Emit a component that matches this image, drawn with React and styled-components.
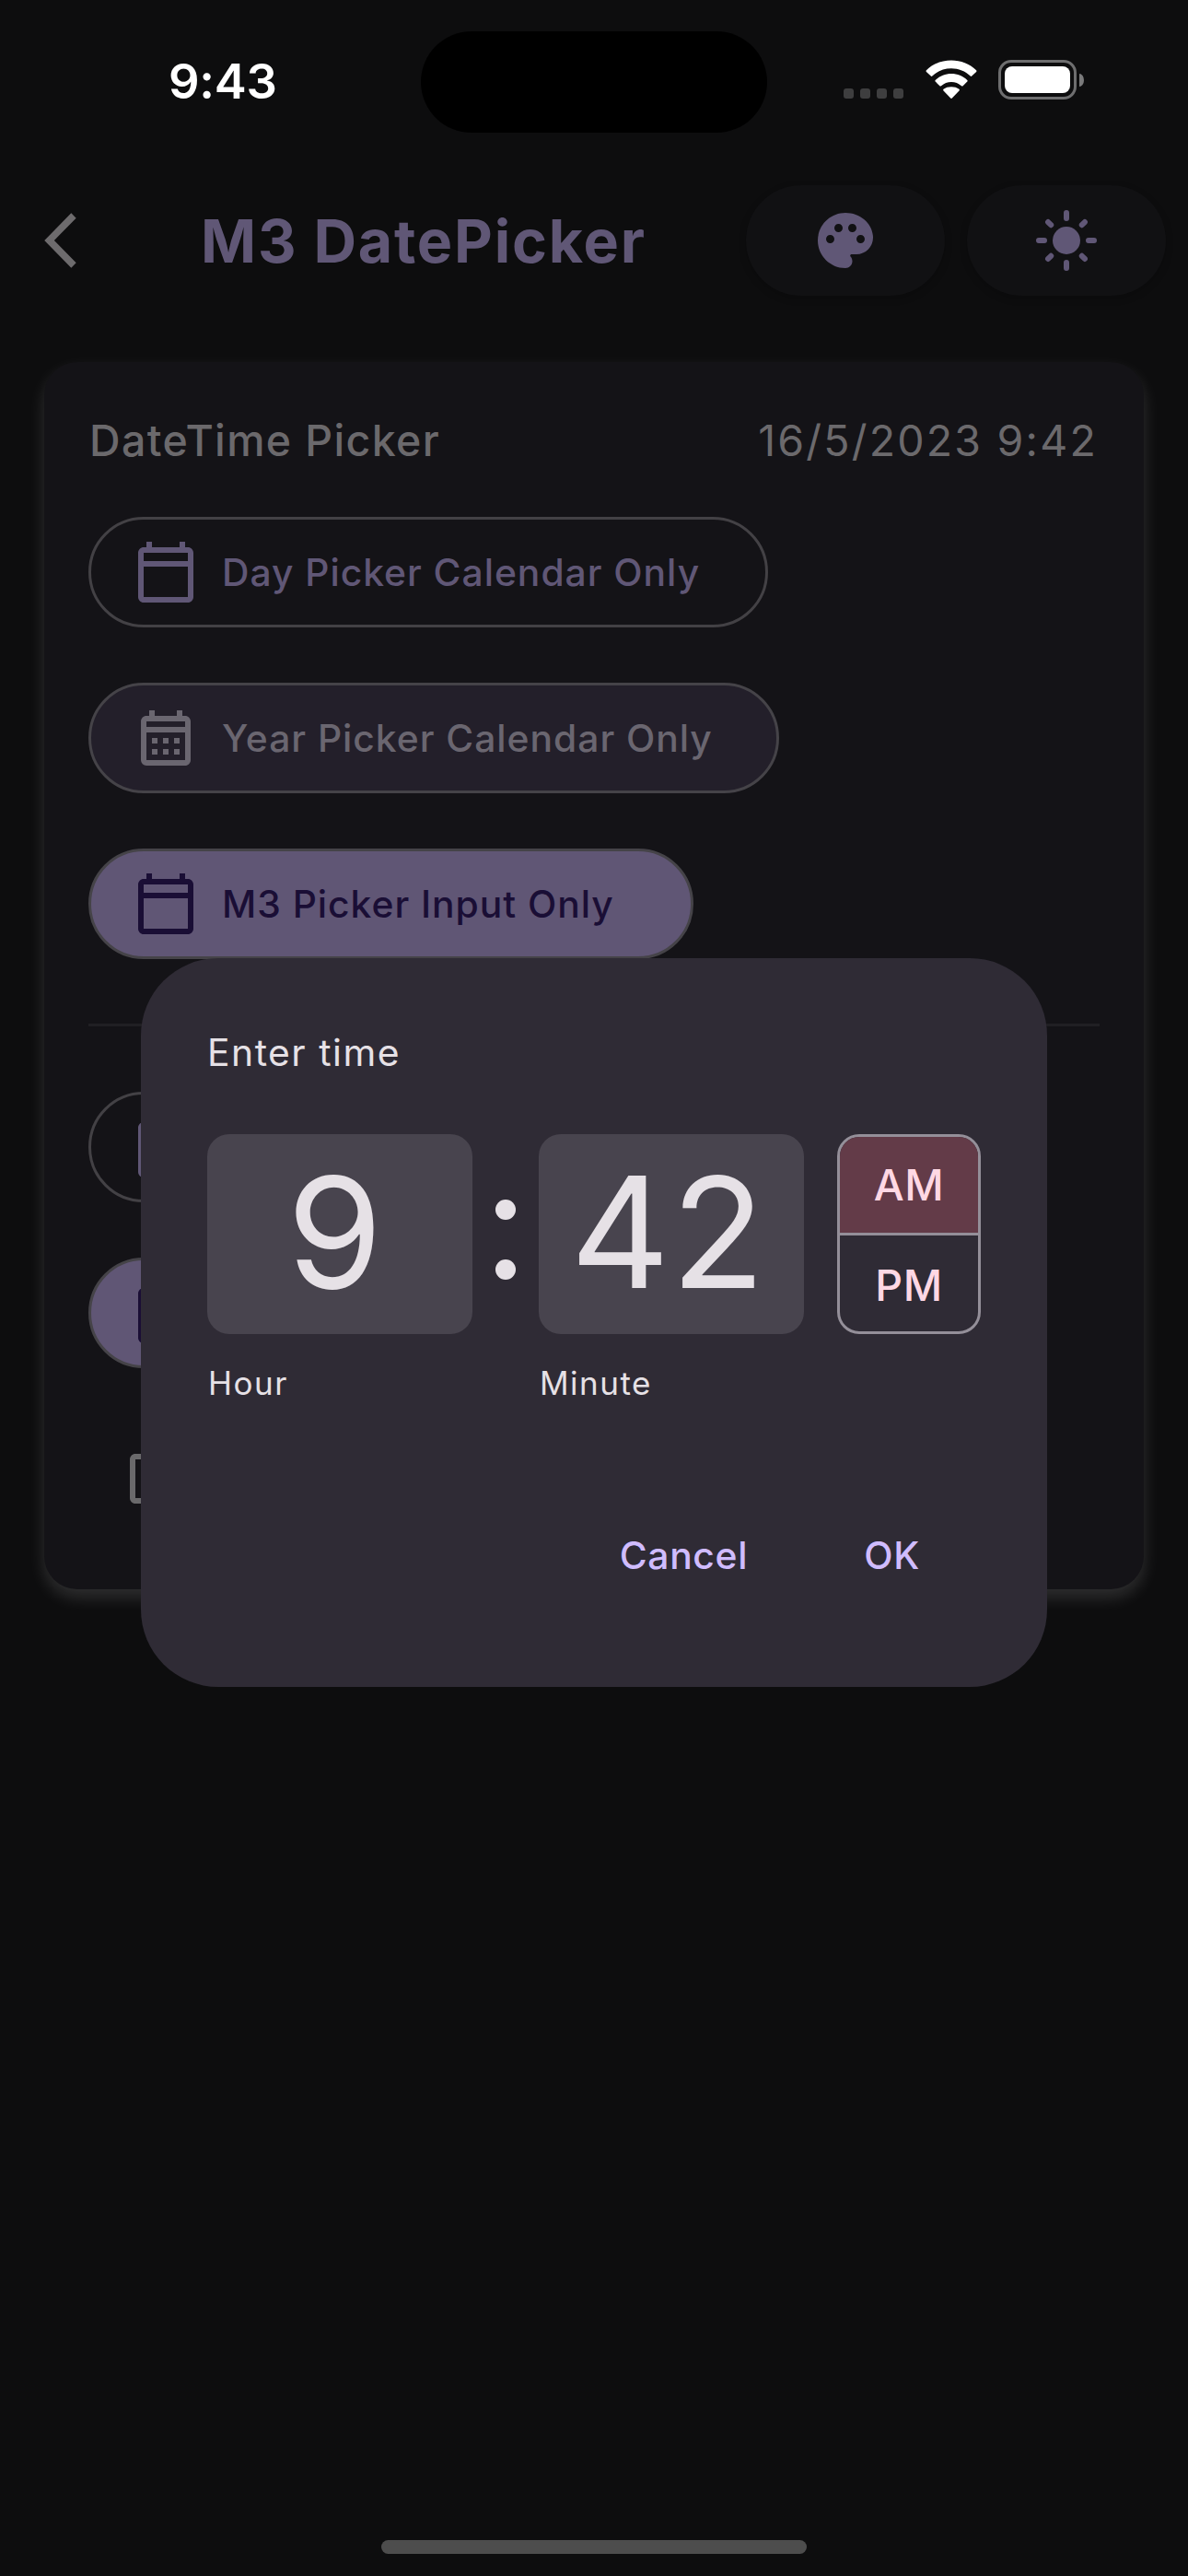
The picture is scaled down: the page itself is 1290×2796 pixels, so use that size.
import React from "react";
import styled, { createGlobalStyle } from "styled-components";

const GlobalStyle = createGlobalStyle`
  * { box-sizing: border-box; }
  html, body { margin: 0; padding: 0; background: #0d0d0e; }
  body { font-family: Inter, "Liberation Sans", sans-serif; }
  button { font-family: inherit; margin: 0; padding: 0; border: none; background: none; }
`;

const Screen = styled.div`
  position: relative;
  width: 1290px;
  height: 2796px;
  overflow: hidden;
  background: #0d0d0e;
  display: flex;
  flex-direction: column;
`;

const StatusBar = styled.header`
  height: 177px;
  flex: none;
  display: flex;
  align-items: flex-start;
`;

const Clock = styled.div`
  width: 457px;
  padding: 62px 0 0 183px;
  font-size: 52.5px;
  line-height: 52px;
  font-weight: 600;
  letter-spacing: -0.3px;
  color: #fff;
`;

const Island = styled.div`
  width: 376px;
  height: 110px;
  margin-top: 34px;
  border-radius: 55px;
  background: #000;
`;

const StatusIcons = styled.div`
  display: flex;
  align-items: flex-end;
  margin: 64px 0 0 83px;
  height: 44px;
`;

const SignalDots = styled.div`
  display: flex;
  gap: 7px;
`;

const SignalDot = styled.span`
  width: 11px;
  height: 11px;
  margin-bottom: 1px;
  border-radius: 3px;
  background: #3e3e3f;
`;

const WifiSvg = styled.svg`
  display: block;
  width: 58px;
  height: 43px;
  margin: 0 0 0 23px;
`;

const Battery = styled.div`
  width: 85px;
  height: 43px;
  margin-left: 22px;
  padding: 4px;
  border: 3px solid #6e6e6f;
  border-radius: 14px;
`;

const BatteryLevel = styled.div`
  height: 100%;
  border-radius: 8px;
  background: #fff;
`;

const BatteryCap = styled.div`
  width: 5px;
  height: 14px;
  margin: 0 0 14px 3px;
  border-radius: 0 5px 5px 0 / 0 7px 7px 0;
  background: #7a7a7b;
`;

const AppBar = styled.div`
  height: 168px;
  flex: none;
  display: flex;
  align-items: center;
  padding: 0 24px 0 48px;
`;

const BackSvg = styled.svg`
  display: block;
  width: 36px;
  height: 60px;
`;

const Title = styled.h1`
  flex: 1;
  margin: 1px 0 0 134px;
  font-size: 64.5px;
  line-height: 84px;
  font-weight: 700;
  letter-spacing: 1.8px;
  color: #605776;
  white-space: nowrap;
`;

const BarActions = styled.div`
  display: flex;
  gap: 24px;
`;

const BarButton = styled.button`
  width: 216px;
  height: 120px;
  border-radius: 60px;
  display: flex;
  align-items: center;
  justify-content: center;
  background: #111113;
  color: #605776;
  box-shadow: 0 3px 9px rgba(0, 0, 0, 0.2);
`;

const IconSvg = styled.svg`
  display: block;
  width: 72px;
  height: 72px;
  flex: none;
  fill: currentColor;
`;

const Card = styled.section`
  flex: none;
  margin: 48px 48px 0;
  height: 1332px;
  padding: 48px;
  border-radius: 36px;
  background: #141317;
  box-shadow: 0 9px 18px rgba(255, 255, 255, 0.14);
`;

const CardHeader = styled.div`
  height: 120px;
  padding: 7px 2px 0 1px;
  display: flex;
  align-items: flex-start;
  justify-content: space-between;
  font-size: 46.5px;
  line-height: 60px;
  color: #6b696c;
  white-space: nowrap;
`;

const CardTitle = styled.span`
  font-weight: 500;
  letter-spacing: 1.35px;
`;

const CardValue = styled.span`
  font-weight: 400;
  letter-spacing: 2.2px;
`;

const PillList = styled.div`
  display: flex;
  flex-direction: column;
  align-items: flex-start;
  gap: 60px;
`;

const tones = {
  outlined: { color: "#605776", background: "transparent", border: "#434145" },
  elevated: { color: "#6a6670", background: "#231f2a", border: "#454348" },
  filled: { color: "#1a0e35", background: "#605675", border: "#454348" },
  plain: { color: "#6a696b", background: "transparent", border: "transparent" },
};

const Pill = styled.button`
  width: ${(p) => p.$width}px;
  height: 120px;
  display: flex;
  align-items: center;
  padding-left: ${(p) => (p.$tone === "plain" ? 33 : 45)}px;
  border: 3px solid ${(p) => tones[p.$tone].border};
  border-radius: 60px;
  background: ${(p) => tones[p.$tone].background};
  color: ${(p) => tones[p.$tone].color};
`;

const PillLabel = styled.span`
  margin-left: 25px;
  font-size: 40.8px;
  line-height: 60px;
  font-weight: 500;
  letter-spacing: 0.98px;
  white-space: nowrap;
`;

const Divider = styled.hr`
  height: 3px;
  margin: 70px 0 71px;
  border: none;
  background: #201f23;
`;

const Dialog = styled.div`
  position: absolute;
  left: 153px;
  top: 1040px;
  width: 984px;
  height: 791px;
  padding: 72px 72px 0;
  border-radius: 84px;
  background: #2f2b35;
  color: #e6e1e6;
  display: flex;
  flex-direction: column;
`;

const DialogTitle = styled.div`
  height: 119px;
  font-size: 40.8px;
  line-height: 61px;
  font-weight: 400;
  letter-spacing: 1.5px;
  white-space: nowrap;
`;

const TimeRow = styled.div`
  display: flex;
  align-items: flex-start;
`;

const TimeField = styled.div`
  width: 288px;
`;

const TimeBox = styled.div`
  height: 217px;
  padding: 0 ${(p) => p.$inset}px 5px 0;
  border-radius: 24px;
  background: #48444e;
  display: flex;
  align-items: center;
  justify-content: center;
  font-size: 167.5px;
  line-height: 200px;
  font-weight: 400;
  letter-spacing: ${(p) => p.$spacing}px;
`;

const FieldLabel = styled.div`
  margin: 32px 0 0 1px;
  font-size: 35px;
  line-height: 42px;
  letter-spacing: 1.5px;
`;

const Colon = styled.div`
  width: 72px;
  height: 217px;
  display: flex;
  flex-direction: column;
  align-items: center;
  padding-top: 71px;
  gap: 43px;
`;

const ColonDot = styled.span`
  width: 22px;
  height: 22px;
  border-radius: 50%;
  background: #e6e1e6;
`;

const Period = styled.div`
  width: 156px;
  height: 217px;
  margin-left: 36px;
  border: 3px solid #948f99;
  border-radius: 24px;
  overflow: hidden;
  display: flex;
  flex-direction: column;
`;

const PeriodOption = styled.button`
  height: ${(p) => (p.$selected ? 107 : 104)}px;
  display: flex;
  align-items: center;
  justify-content: center;
  padding-top: ${(p) => (p.$selected ? 0 : 4)}px;
  border-bottom: ${(p) => (p.$selected ? "3px solid #948f99" : "none")};
  background: ${(p) => (p.$selected ? "#633b48" : "transparent")};
  color: #ffd8e4;
  font-size: 46.5px;
  line-height: 60px;
  font-weight: 500;
  letter-spacing: 0.5px;
`;

const Actions = styled.div`
  display: flex;
  justify-content: flex-end;
  gap: 126px;
  margin-top: 136px;
  padding-right: 66px;
`;

const TextButton = styled.button`
  color: #d0bcff;
  font-size: 40.8px;
  line-height: 60px;
  font-weight: 500;
  letter-spacing: 0.7px;
`;

const HomeIndicator = styled.div`
  width: 462px;
  height: 15px;
  margin: auto auto 24px;
  border-radius: 8px;
  background: #4d4d4d;
`;

const paths = {
  palette:
    "M12 2C6.49 2 2 6.49 2 12s4.49 10 10 10c1.38 0 2.5-1.12 2.5-2.5 0-.61-.23-1.2-.64-1.67-.08-.1-.13-.21-.13-.33 0-.28.22-.5.5-.5H16c3.31 0 6-2.69 6-6 0-4.96-4.49-9-10-9zm5.5 11c-.83 0-1.5-.67-1.5-1.5s.67-1.5 1.5-1.5 1.5.67 1.5 1.5-.67 1.5-1.5 1.5zm-3-4c-.83 0-1.5-.67-1.5-1.5S13.67 6 14.5 6s1.5.67 1.5 1.5S15.33 9 14.5 9zM5 11.5c0-.83.67-1.5 1.5-1.5s1.5.67 1.5 1.5S7.33 13 6.5 13 5 12.33 5 11.5zm6-4c0 .83-.67 1.5-1.5 1.5S8 8.33 8 7.5 8.67 6 9.5 6s1.5.67 1.5 1.5z",
  calendar:
    "M20 3h-1V1h-2v2H7V1H5v2H4c-1.1 0-2 .9-2 2v16c0 1.1.9 2 2 2h16c1.1 0 2-.9 2-2V5c0-1.1-.9-2-2-2zm0 18H4V10h16v11zm0-13H4V5h16v3z",
  month:
    "M19 4h-1V2h-2v2H8V2H6v2H5c-1.11 0-1.99.9-1.99 2L3 20a2 2 0 0 0 2 2h14c1.1 0 2-.9 2-2V6c0-1.1-.9-2-2-2zm0 16H5V10h14v10zm0-12H5V6h14v2zM9 14H7v-2h2v2zm4 0h-2v-2h2v2zm4 0h-2v-2h2v2zm-8 4H7v-2h2v2zm4 0h-2v-2h2v2zm4 0h-2v-2h2v2z",
  box: "M19 3H5c-1.1 0-2 .9-2 2v14c0 1.1.9 2 2 2h14c1.1 0 2-.9 2-2V5c0-1.1-.9-2-2-2zm0 16H5V5h14v14z",
};

const Icon = ({ name }) => (
  <IconSvg viewBox="0 0 24 24">
    <path d={paths[name]} />
  </IconSvg>
);

const SunIcon = () => (
  <IconSvg viewBox="0 0 24 24">
    <circle cx="12" cy="12" r="5" />
    <g stroke="currentColor" strokeWidth="2" strokeLinecap="round">
      <path d="M12 2v2M12 20v2M2 12h2M20 12h2" />
      <path d="M5.35 5.35l1.06 1.06M17.59 17.59l1.06 1.06M18.65 5.35l-1.06 1.06M6.41 17.59l-1.06 1.06" />
    </g>
  </IconSvg>
);

const WifiIcon = () => (
  <WifiSvg viewBox="0 0 58 43" fill="#fff">
    <path d="M29 9.200c7.900 0 15.200 3 20.700 8.400.5.4 1.100.4 1.500 0l4.900-4.700c.5-.5.5-1.200 0-1.700C48.800 4.200 39.300.5 29 .5S9.200 4.200 1.900 11.200c-.5.5-.5 1.200 0 1.700l4.900 4.700c.4.4 1 .4 1.500 0C13.800 12.200 21.100 9.200 29 9.200z" />
    <path d="M29 24c4.100 0 8 1.500 11 4.200.5.4 1.100.4 1.600 0l4.700-4.600c.5-.5.5-1.200 0-1.700C41.600 17.600 35.500 15 29 15s-12.600 2.600-17.300 6.900c-.5.5-.5 1.200 0 1.700l4.700 4.600c.5.4 1.100.4 1.600 0C21 25.500 24.900 24 29 24z" />
    <path d="M37.500 33.400c.5-.5.5-1.200 0-1.700C35.200 30 32.200 29.200 29 29.200s-6.200.8-8.500 2.500c-.5.5-.5 1.200 0 1.700l7.700 8.200c.5.5 1.100.5 1.600 0z" />
  </WifiSvg>
);

const pickers = [
  { tone: "outlined", icon: "calendar", label: "Day Picker Calendar Only", width: 738 },
  { tone: "elevated", icon: "month", label: "Year Picker Calendar Only", width: 750 },
  { tone: "filled", icon: "calendar", label: "M3 Picker Input Only", width: 657 },
];

const timePickers = [
  { tone: "outlined", icon: "calendar", width: 660 },
  { tone: "filled", icon: "calendar", width: 660 },
  { tone: "plain", icon: "box", width: 660 },
];

const Pills = ({ items }) => (
  <PillList>
    {items.map((item, i) => (
      <Pill key={i} $tone={item.tone} $width={item.width}>
        <Icon name={item.icon} />
        {item.label && <PillLabel>{item.label}</PillLabel>}
      </Pill>
    ))}
  </PillList>
);

export default function App() {
  return (
    <>
      <GlobalStyle />
      <Screen>
        <StatusBar>
          <Clock>9:43</Clock>
          <Island />
          <StatusIcons>
            <SignalDots>
              <SignalDot />
              <SignalDot />
              <SignalDot />
              <SignalDot />
            </SignalDots>
            <WifiIcon />
            <Battery>
              <BatteryLevel />
            </Battery>
            <BatteryCap />
          </StatusIcons>
        </StatusBar>

        <AppBar>
          <BackSvg viewBox="0 0 36 60" fill="none" stroke="#6d6b6d" strokeWidth="7.500">
            <path d="M32 3L5.500 30L32 57" />
          </BackSvg>
          <Title>M3 DatePicker</Title>
          <BarActions>
            <BarButton>
              <Icon name="palette" />
            </BarButton>
            <BarButton>
              <SunIcon />
            </BarButton>
          </BarActions>
        </AppBar>

        <Card>
          <CardHeader>
            <CardTitle>DateTime Picker</CardTitle>
            <CardValue>16/5/2023 9:42</CardValue>
          </CardHeader>
          <Pills items={pickers} />
          <Divider />
          <Pills items={timePickers} />
        </Card>

        <HomeIndicator />

        <Dialog role="dialog">
          <DialogTitle>Enter time</DialogTitle>
          <TimeRow>
            <TimeField>
              <TimeBox $spacing={0} $inset={11}>9</TimeBox>
              <FieldLabel>Hour</FieldLabel>
            </TimeField>
            <Colon>
              <ColonDot />
              <ColonDot />
            </Colon>
            <TimeField>
              <TimeBox $spacing={1} $inset={7}>42</TimeBox>
              <FieldLabel>Minute</FieldLabel>
            </TimeField>
            <Period>
              <PeriodOption $selected>AM</PeriodOption>
              <PeriodOption>PM</PeriodOption>
            </Period>
          </TimeRow>
          <Actions>
            <TextButton>Cancel</TextButton>
            <TextButton>OK</TextButton>
          </Actions>
        </Dialog>
      </Screen>
    </>
  );
}
